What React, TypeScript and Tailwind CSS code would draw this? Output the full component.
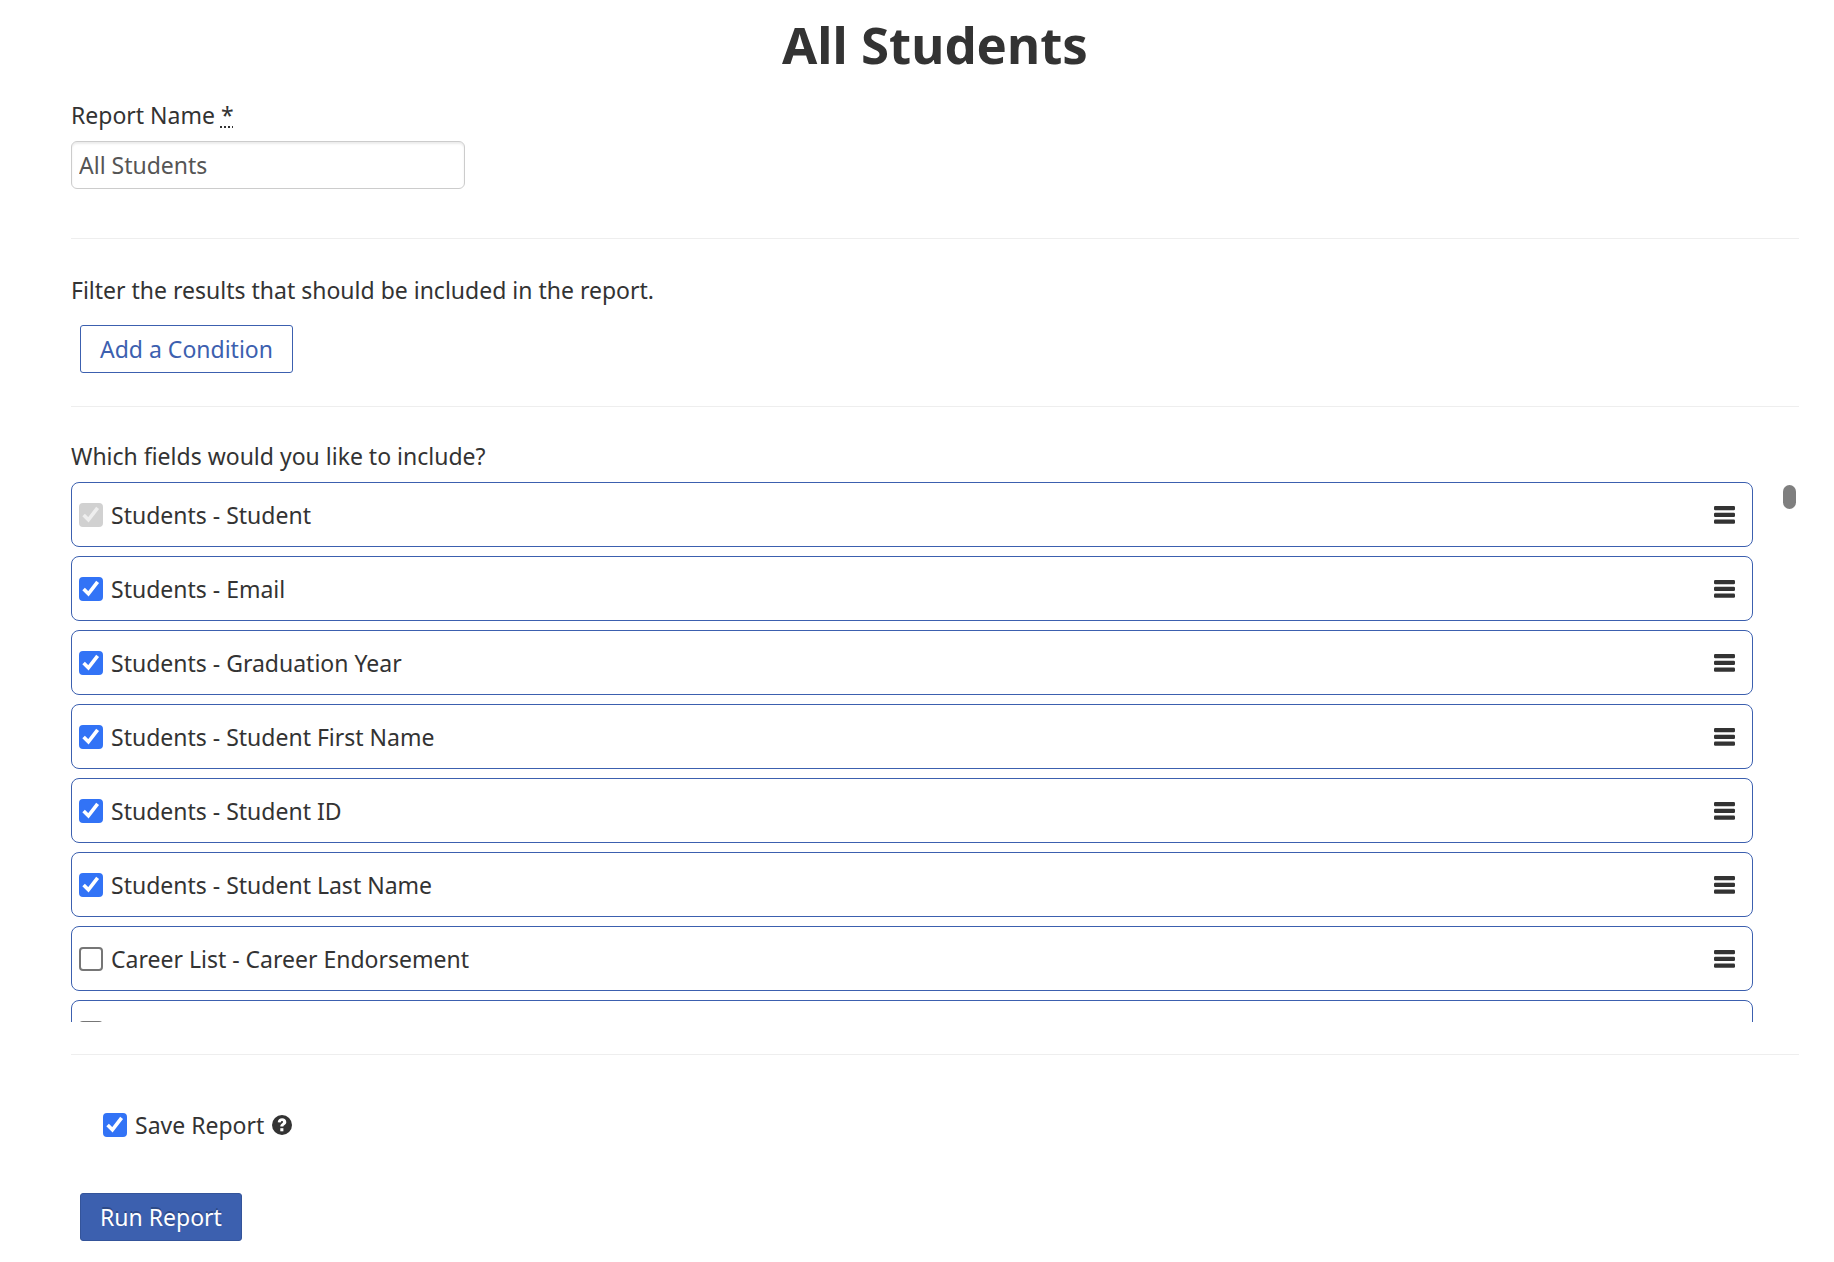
import { useState } from 'react';
import type { ReactNode } from 'react';

type Field = {
  id: string;
  label: string;
  included: boolean;
  required?: boolean;
};

const initialFields: Field[] = [
  { id: 'student', label: 'Students - Student', included: true, required: true },
  { id: 'email', label: 'Students - Email', included: true },
  { id: 'graduation-year', label: 'Students - Graduation Year', included: true },
  { id: 'first-name', label: 'Students - Student First Name', included: true },
  { id: 'student-id', label: 'Students - Student ID', included: true },
  { id: 'last-name', label: 'Students - Student Last Name', included: true },
  { id: 'career-endorsement', label: 'Career List - Career Endorsement', included: false },
  { id: 'career-name', label: 'Career List - Career Name', included: false },
];

type CheckboxProps = {
  id: string;
  checked: boolean;
  disabled?: boolean;
  onChange: (checked: boolean) => void;
};

function Checkbox({ id, checked, disabled, onChange }: CheckboxProps) {
  return (
    <span className="grid size-6 shrink-0">
      <input
        id={id}
        type="checkbox"
        checked={checked}
        disabled={disabled}
        onChange={(e) => onChange(e.target.checked)}
        className="peer col-start-1 row-start-1 size-6 appearance-none rounded-[4px] border-2 border-[#767676] bg-white checked:border-[#3273f6] checked:bg-[#3273f6] disabled:border-[#d1d1d1] disabled:bg-[#d1d1d1]"
      />
      <svg
        viewBox="0 0 24 24"
        fill="none"
        stroke="currentColor"
        strokeWidth="3.6"
        aria-hidden="true"
        className="pointer-events-none invisible col-start-1 row-start-1 size-6 text-white peer-checked:visible peer-disabled:text-[#eeeeee]"
      >
        <path d="M4.6 12 9.4 16.8 18.6 4.8" />
      </svg>
    </span>
  );
}

function DragHandle({ label }: { label: string }) {
  return (
    <button type="button" aria-label={`Move ${label}`} className="cursor-move text-[#333333]">
      <svg viewBox="0 0 21 18" fill="currentColor" className="h-[18px] w-[21px]">
        <rect x="0" y="0" width="21" height="4.2" rx="1.2" />
        <rect x="0" y="6.8" width="21" height="4.2" rx="1.2" />
        <rect x="0" y="13.6" width="21" height="4.2" rx="1.2" />
      </svg>
    </button>
  );
}

function HelpIcon() {
  return (
    <svg viewBox="0 0 20 20" role="img" aria-label="Help" className="size-5 text-[#333333]">
      <circle cx="10" cy="10" r="10" fill="currentColor" />
      <path
        d="M5.7 7.3C6 4.8 7.7 3.3 10.1 3.3c2.4 0 4.2 1.5 4.2 3.6 0 2.9-2.9 2.9-2.9 4.7H8.3c0-3.2 2.7-3.1 2.7-4.6 0-.6-.4-1-1-1-.7 0-1.1.5-1.4 1.6z"
        fill="white"
      />
      <rect x="8.3" y="13.2" width="3.1" height="3.1" fill="white" />
    </svg>
  );
}

function Section({ children, className }: { children: ReactNode; className: string }) {
  return <section className={`border-b border-[#eeeeee] ${className}`}>{children}</section>;
}

export default function App() {
  const [name, setName] = useState('All Students');
  const [fields, setFields] = useState(initialFields);
  const [save, setSave] = useState(true);

  const toggleField = (id: string, included: boolean) => {
    setFields(fields.map((field) => (field.id === id ? { ...field, included } : field)));
  };

  return (
    <main className="bg-white pt-[10px] pr-[35px] pb-5 pl-[71px] font-['Noto_Sans',sans-serif] text-[23px] leading-8 text-[#333333]">
      <h1 className="text-center text-[51px] leading-[68px] font-bold">All Students</h1>

      <form onSubmit={(e) => e.preventDefault()}>
        {/* Report name */}
        <Section className="pt-[21px] pb-[49px]">
          <label htmlFor="report-name" className="block">
            Report Name{' '}
            <abbr title="required" className="underline decoration-dotted decoration-2 underline-offset-2">
              *
            </abbr>
          </label>
          <input
            id="report-name"
            type="text"
            value={name}
            onChange={(e) => setName(e.target.value)}
            className="mt-[10px] block h-12 w-[394px] rounded-md border border-[#cccccc] px-[7px] text-[#555555] shadow-[inset_0_2px_2px_rgba(0,0,0,0.075)]"
          />
        </Section>

        {/* Filters */}
        <Section className="pt-[35px] pb-[33px]">
          <p>Filter the results that should be included in the report.</p>
          <button
            type="button"
            className="mt-[19px] ml-[9px] h-12 rounded-[3px] border border-[#3c60af] px-[19px] text-[#3c60af]"
          >
            Add a Condition
          </button>
        </Section>

        {/* Fields */}
        <Section className="pt-[33px] pb-8">
          <h2>Which fields would you like to include?</h2>
          <div className="mt-[10px] flex h-[540px]">
            <ul className="flex flex-1 flex-col gap-[9px] overflow-y-auto [scrollbar-width:none]">
              {fields.map((field) => (
                <li
                  key={field.id}
                  className="flex h-[65px] shrink-0 items-center gap-2 rounded-lg border border-[#3c60af] pr-[17px] pl-[7px]"
                >
                  <Checkbox
                    id={field.id}
                    checked={field.included}
                    disabled={field.required}
                    onChange={(included) => toggleField(field.id, included)}
                  />
                  <label htmlFor={field.id} className="flex-1">
                    {field.label}
                  </label>
                  <DragHandle label={field.label} />
                </li>
              ))}
            </ul>
            <div className="w-[46px] pt-[3px] pl-[30px]" aria-hidden="true">
              <div className="h-6 w-[13px] rounded-full bg-[#7f7f7f]" />
            </div>
          </div>
        </Section>

        {/* Save and run */}
        <div className="mt-[54px] ml-8 flex items-center">
          <Checkbox id="save-report" checked={save} onChange={setSave} />
          <label htmlFor="save-report" className="mx-2">
            Save Report
          </label>
          <HelpIcon />
        </div>
        <button
          type="submit"
          className="mt-[52px] ml-[9px] h-12 rounded-[3px] border border-[#34549a] bg-[#3c60af] px-[19px] text-white [text-shadow:0_-2px_0_rgba(0,0,0,0.25)]"
        >
          Run Report
        </button>
      </form>
    </main>
  );
}
